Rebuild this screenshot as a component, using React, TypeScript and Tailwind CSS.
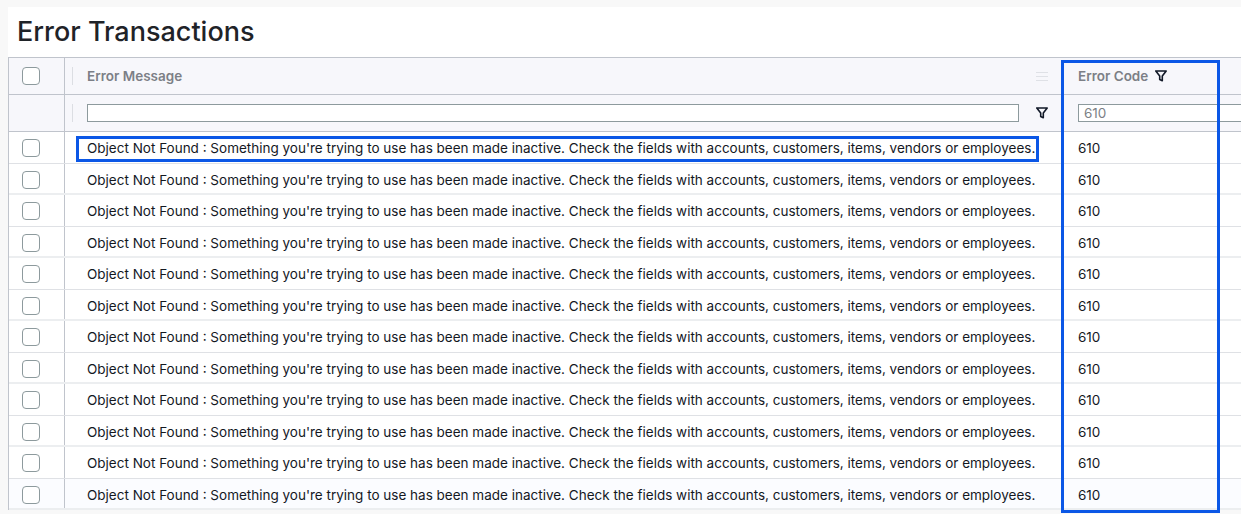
const message =
  "Object Not Found : Something you're trying to use has been made inactive. Check the fields with accounts, customers, items, vendors or employees.";

const rows = Array.from({ length: 12 }, (_, i) => i);

function Checkbox() {
  return <span className="block h-[18px] w-[18px] rounded-[4px] border-[1.5px] border-[#8d9a9d] bg-white" />;
}

function FilterIcon({ className }: { className?: string }) {
  return (
    <svg viewBox="0 0 12 12" className={className} fill="none" stroke="#111827" strokeWidth="1.6" strokeLinejoin="round">
      <path d="M0.8 1h10.4L7.3 6v4.8L4.7 9.5V6z" />
    </svg>
  );
}

export default function App() {
  return (
    <div className="relative h-[514px] w-[1241px] overflow-hidden bg-[#f8f8f8] font-['Inter',sans-serif] subpixel-antialiased">
      <div className="ml-2 pt-[7px]">
        <div className="bg-white">
          <h1 className="h-[50px] pl-[9px] pt-[7px] text-[27px] font-medium leading-[36px] text-[#1f2328]">Error Transactions</h1>
          <div className="border-l border-t border-[#c0c4cc]">
            <div className="flex h-[37px] border-b border-[#c0c4cc] bg-[#f7f7fb] text-[13.5px] font-semibold text-[#7c7f86]">
              <div className="flex w-[56px] shrink-0 items-center border-r border-[#c0c4cc] pl-[13px]">
                <Checkbox />
              </div>
              <div className="flex w-[998px] shrink-0 items-center pl-[7px]">
                <span className="h-[18px] w-px bg-[#dcdee3]" />
                <span className="ml-[14px]">Error Message</span>
                <div className="ml-auto mr-[15px] flex w-[12px] flex-col gap-[3px]">
                  <span className="h-px bg-[#dfe1e6]" />
                  <span className="h-px bg-[#dfe1e6]" />
                  <span className="h-px bg-[#dfe1e6]" />
                </div>
              </div>
              <div className="flex flex-1 items-center pl-[15px]">
                <span>Error Code</span>
                <FilterIcon className="ml-[7px] h-[12px] w-[12px]" />
              </div>
            </div>
            <div className="flex h-[37px] border-b border-[#c0c4cc] bg-[#f7f7fb]">
              <div className="w-[56px] shrink-0 border-r border-[#c0c4cc]" />
              <div className="flex w-[998px] shrink-0 items-center pl-[7px]">
                <span className="h-[18px] w-px bg-[#dcdee3]" />
                <input readOnly className="ml-[14px] h-[18px] w-[932px] border border-[#8d9a9d] bg-white" />
                <FilterIcon className="ml-[17px] h-[12px] w-[12px]" />
              </div>
              <div className="flex flex-1 items-center pl-[15px]">
                <input
                  readOnly
                  value="610"
                  className="h-[18px] w-[200px] border border-[#8d9a9d] bg-white pl-[5px] text-[13.5px] text-[#7c7f86]"
                />
              </div>
            </div>
            {rows.map((i) => (
              <div
                key={i}
                className={`flex text-[13.5px] leading-[18px] text-[#14181f] ${
                  i % 2 === 0 ? "h-[32px] border-b border-[#dfe1e5]" : "h-[31px] border-b-2 border-[#eceef0]"
                } ${i === 11 ? "bg-[#fbfcff]" : "bg-white"}`}
              >
                <div className="w-[56px] shrink-0 border-r border-[#c0c4cc] pl-[13px] pt-[7px]">
                  <Checkbox />
                </div>
                <div className="w-[998px] shrink-0 whitespace-nowrap pl-[22px] pt-[7px]">{message}</div>
                <div className="flex-1 pl-[15px] pt-[7px]">610</div>
              </div>
            ))}
          </div>
        </div>
      </div>
      <div className="absolute left-[76px] top-[136px] h-[26px] w-[963px] border-[3px] border-[#0b57e6]" />
      <div className="absolute left-[1061px] top-[60px] h-[453px] w-[159px] border-[3px] border-[#0b57e6]" />
    </div>
  );
}
